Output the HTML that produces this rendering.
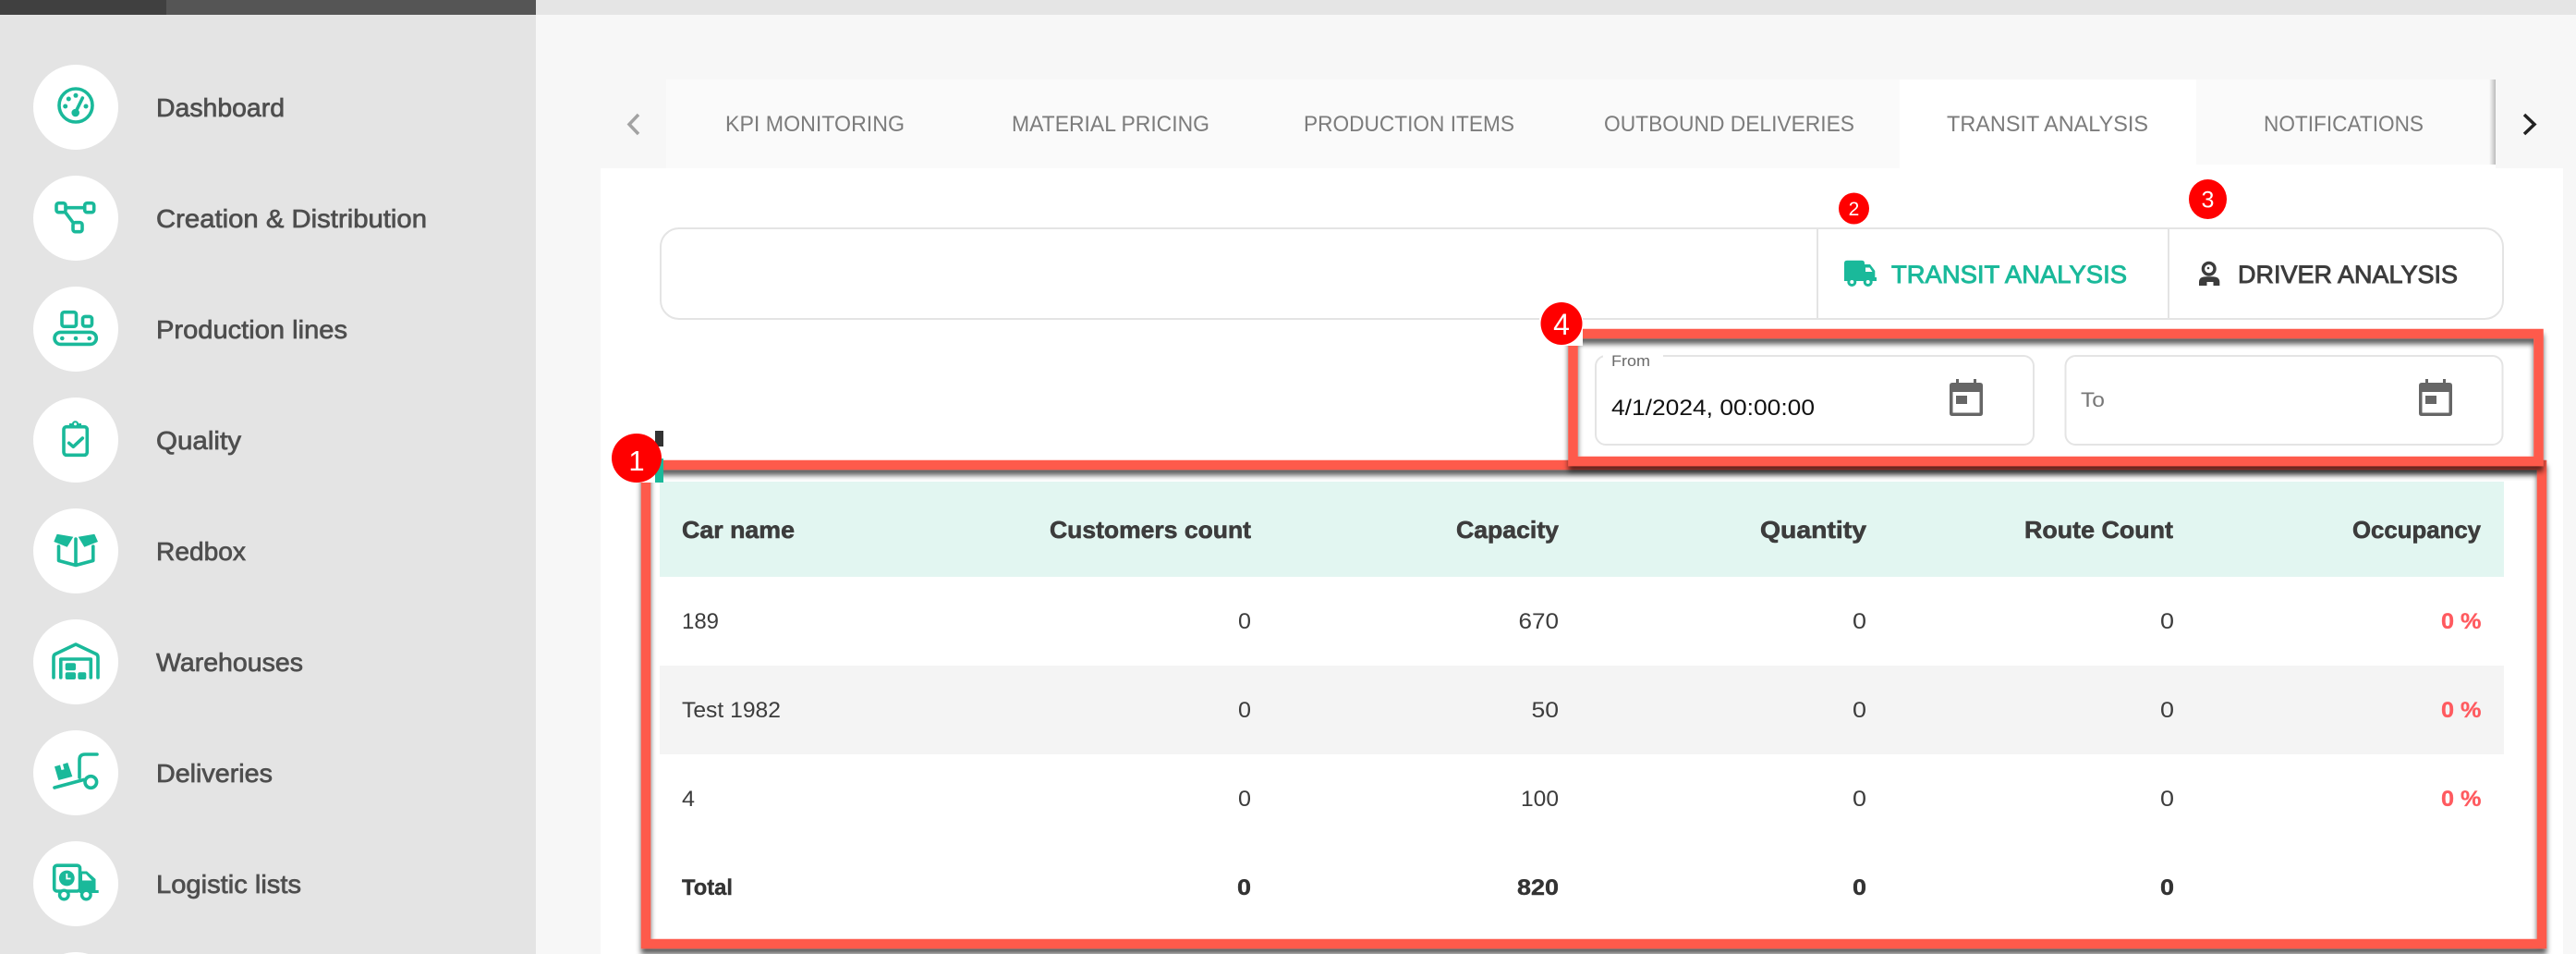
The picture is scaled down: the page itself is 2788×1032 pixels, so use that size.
<!DOCTYPE html>
<html lang="en">
<head>
<meta charset="utf-8">
<title>Transit Analysis</title>
<style>
html,body{margin:0;padding:0;width:2788px;height:1032px;overflow:hidden;background:#f7f7f7}
svg{display:block}
text{font-family:"Liberation Sans",sans-serif}
.nav{font-size:28px;fill:#4e4e4e;stroke:#4e4e4e;stroke-width:.7px}
.tab{font-size:24px;fill:#7c7c7c}
.btn{font-size:27px;stroke-width:.9px}
.th{font-size:26px;font-weight:700;fill:#3c3c3c;stroke:#3c3c3c;stroke-width:.6px}
.td{font-size:24px;fill:#3c3c3c}
.tb{font-size:24px;font-weight:700;fill:#333;stroke:#333;stroke-width:.4px}
.pc{font-size:24px;font-weight:700;fill:#ff5a5f;stroke:#ff5a5f;stroke-width:.3px}
.bd{fill:#fff;text-anchor:middle}
.i{fill:none;stroke:#1ab99a;stroke-width:3.6;stroke-linecap:round;stroke-linejoin:round}
.f{fill:#1ab99a;stroke:none}
</style>
</head>
<body>
<svg xmlns="http://www.w3.org/2000/svg" width="2788" height="1032" viewBox="0 0 2788 1032">
<defs>
<filter id="sh" filterUnits="userSpaceOnUse" x="600" y="300" width="2188" height="732">
<feDropShadow dx="0" dy="6" stdDeviation="3" flood-color="#000" flood-opacity=".62"/>
</filter>
<linearGradient id="edge" x1="0" x2="1" y1="0" y2="0">
<stop offset="0" stop-color="#000" stop-opacity="0"/>
<stop offset="1" stop-color="#000" stop-opacity=".25"/>
</linearGradient>
</defs>

<!-- page backgrounds -->
<rect width="2788" height="1032" fill="#f7f7f7"/>
<rect x="580" width="2208" height="16" fill="#e5e5e5"/>
<rect width="180" height="16" fill="#404040"/>
<rect x="180" width="400" height="16" fill="#555"/>
<rect y="16" width="580" height="1016" fill="#e4e4e4"/>

<!-- sidebar -->
<g fill="#fff">
<circle cx="82" cy="116" r="46"/><circle cx="82" cy="236" r="46"/><circle cx="82" cy="356" r="46"/><circle cx="82" cy="476" r="46"/><circle cx="82" cy="596" r="46"/><circle cx="82" cy="716" r="46"/><circle cx="82" cy="836" r="46"/><circle cx="82" cy="956" r="46"/><path d="M68.600 1032A46 46 0 0 1 95.400 1032z"/>
</g>
<text class="nav" x="169" y="126" textLength="139" lengthAdjust="spacingAndGlyphs">Dashboard</text>
<text class="nav" x="169" y="246" textLength="293" lengthAdjust="spacingAndGlyphs">Creation &amp; Distribution</text>
<text class="nav" x="169" y="366" textLength="207" lengthAdjust="spacingAndGlyphs">Production lines</text>
<text class="nav" x="169" y="486" textLength="92" lengthAdjust="spacingAndGlyphs">Quality</text>
<text class="nav" x="169" y="606" textLength="97" lengthAdjust="spacingAndGlyphs">Redbox</text>
<text class="nav" x="169" y="726" textLength="159" lengthAdjust="spacingAndGlyphs">Warehouses</text>
<text class="nav" x="169" y="846" textLength="126" lengthAdjust="spacingAndGlyphs">Deliveries</text>
<text class="nav" x="169" y="966" textLength="157" lengthAdjust="spacingAndGlyphs">Logistic lists</text>

<!-- dashboard icon -->
<circle class="i" cx="82" cy="114" r="18"/>
<g class="f"><circle cx="70.700" cy="115" r="2.500"/><circle cx="74.300" cy="107" r="2.500"/><circle cx="82" cy="103.300" r="2.500"/><circle cx="93" cy="115" r="2.500"/><circle cx="81.700" cy="122" r="4.300"/></g>
<path class="i" d="M82 121L89.300 106"/>
<!-- network icon -->
<g class="i"><rect x="61" y="219.700" width="10" height="10" rx="2.500"/><rect x="91.700" y="219.700" width="10" height="10" rx="2.500"/><rect x="79" y="240.700" width="10" height="10" rx="2.500"/><path d="M71 224.700H91.700M71 230L79 240.700"/></g>
<!-- conveyor icon -->
<g class="i"><rect x="67" y="337.700" width="15.500" height="15.500" rx="2.500"/><rect x="89.500" y="342.400" width="10" height="10.500" rx="2.500"/><rect x="59" y="359.400" width="45.300" height="13" rx="6.500"/></g>
<g class="f"><circle cx="67.300" cy="366" r="2.300"/><circle cx="82" cy="366" r="2.300"/><circle cx="96.700" cy="366" r="2.300"/></g>
<!-- clipboard icon -->
<g class="i"><rect x="69" y="461.700" width="25.300" height="30.600" rx="3"/><path d="M74.700 479.300L79.300 483.300L89.300 474"/></g>
<path class="f" d="M75 462.500V458h3a3.600 3.600 0 0 1 7 0h3v4.500z"/>
<circle cx="81.500" cy="458.700" r="1.500" fill="#fff"/>
<!-- box icon -->
<g class="f"><path d="M61.700 577.700L79.300 580.700L72.700 591.700L58.300 586z"/><path d="M102.300 577.700L84.700 580.700L91.300 591.700L106 586z"/></g>
<path class="i" d="M63.500 591V606.500L82 611.500L100.800 606.500V591M82 583V611"/>
<!-- warehouse icon -->
<g class="i"><path d="M58 733V711Q58 708 61 707L82 697L103 707Q106 708 106 711V733"/><path d="M65.800 733V713H98.300V733"/></g>
<g class="f"><rect x="70.700" y="717.300" width="11.300" height="8" rx="2"/><rect x="70.700" y="727.300" width="11.300" height="7.700" rx="2"/><rect x="84.300" y="727.300" width="9" height="7.700" rx="2"/></g>
<!-- deliveries icon -->
<path class="i" d="M105 816H92Q86 816 86 822V841M59 852L90.500 843.500"/>
<circle class="i" cx="98.300" cy="846" r="6.300"/>
<path class="f" d="M59 829.300L65 827.500L66.500 833L69.500 832.200L68 826.700L73.300 825L78.300 840L63.300 844z"/>
<!-- logistics icon -->
<rect class="i" x="58.700" y="936.200" width="27.800" height="27.800" rx="3"/>
<circle class="f" cx="72.300" cy="950" r="8.400"/>
<path d="M72.300 945V950.500H76.500" fill="none" stroke="#fff" stroke-width="1.800"/>
<path class="f" d="M86 942.500H94L103.500 951V963H106.700V966H86z"/>
<path d="M89 945.500H93L99.500 952.500H89z" fill="#fff"/>
<g fill="#fff" stroke="#1ab99a" stroke-width="3.400"><circle cx="69.300" cy="968" r="4.800"/><circle cx="93.300" cy="968" r="4.800"/></g>

<!-- tabs -->
<rect x="721" y="86" width="1335" height="96" fill="#fafafa"/>
<rect x="2377" y="86" width="324" height="92" fill="#fafafa"/>
<rect x="2694" y="86" width="7" height="96" fill="url(#edge)"/>
<rect x="650" y="182" width="2124" height="850" fill="#fff"/>
<rect x="2056" y="86" width="321" height="100" fill="#fff"/>
<rect x="2377" y="178" width="324" height="4" fill="#fff"/>
<path d="M691 124L681 134.500L691 145" fill="none" stroke="#a2a2a2" stroke-width="3.500"/>
<path d="M2732 124L2743 134.500L2732 145" fill="none" stroke="#222" stroke-width="3.500"/>
<text class="tab" x="785" y="142" textLength="194" lengthAdjust="spacingAndGlyphs">KPI MONITORING</text>
<text class="tab" x="1095" y="142" textLength="214" lengthAdjust="spacingAndGlyphs">MATERIAL PRICING</text>
<text class="tab" x="1411" y="142" textLength="228" lengthAdjust="spacingAndGlyphs">PRODUCTION ITEMS</text>
<text class="tab" x="1736" y="142" textLength="271" lengthAdjust="spacingAndGlyphs">OUTBOUND DELIVERIES</text>
<text class="tab" x="2107" y="142" textLength="218" lengthAdjust="spacingAndGlyphs">TRANSIT ANALYSIS</text>
<text class="tab" x="2450" y="142" textLength="173" lengthAdjust="spacingAndGlyphs">NOTIFICATIONS</text>

<!-- button group -->
<rect x="715" y="247" width="1994" height="98" rx="20" fill="#fff" stroke="#e4e4e4" stroke-width="2"/>
<path d="M1967 247V345M2347 247V345" stroke="#e4e4e4" stroke-width="2"/>
<path class="f" d="M1999 281.700H2015Q2018 281.700 2018 284.700V286H2024L2029.300 293V300H2031V304H1996V284.700Q1996 281.700 1999 281.700z"/>
<path d="M2019 289.500H2023.500L2026.500 294H2019z" fill="#fff"/>
<g fill="#fff" stroke="#1ab99a" stroke-width="3"><circle cx="2004.300" cy="305" r="3.500"/><circle cx="2021.700" cy="305" r="3.500"/></g>
<text class="btn" x="2047" y="306" textLength="255" lengthAdjust="spacingAndGlyphs" fill="#1ab99a" stroke="#1ab99a">TRANSIT ANALYSIS</text>
<circle cx="2390.700" cy="290.700" r="6.300" fill="none" stroke="#3c3c3c" stroke-width="3.400"/>
<circle cx="2390" cy="290" r="1.300" fill="#3c3c3c"/>
<path d="M2380 309V305Q2380 299.300 2388 299.300H2394Q2402.300 299.300 2402.300 305V309z" fill="#3c3c3c"/>
<rect x="2388.500" y="305" width="7" height="4" fill="#fff"/>
<text class="btn" x="2422" y="306" textLength="238" lengthAdjust="spacingAndGlyphs" fill="#3c3c3c" stroke="#3c3c3c">DRIVER ANALYSIS</text>

<!-- date fields -->
<rect x="1727" y="385" width="474" height="96" rx="11" fill="#fff" stroke="#e4e4e4" stroke-width="2"/>
<rect x="2235.500" y="385" width="473" height="96" rx="11" fill="#fff" stroke="#e4e4e4" stroke-width="2"/>
<rect x="1735" y="380" width="65" height="10" fill="#fff"/>
<text x="1744" y="396" font-size="17" fill="#6a6a6a" textLength="42" lengthAdjust="spacingAndGlyphs">From</text>
<text x="1744" y="449" font-size="24" fill="#111" textLength="220" lengthAdjust="spacingAndGlyphs">4/1/2024, 00:00:00</text>
<text x="2252" y="440" font-size="22" fill="#777" textLength="26" lengthAdjust="spacingAndGlyphs">To</text>
<g fill="#666">
<path d="M2117 410h3v4h16v-4h3v4h4q3 0 3 3v30q0 3 -3 3h-30q-3 0 -3 -3v-30q0 -3 3 -3h4zM2113.500 424v22.500h29v-22.500zM2117 428h12v9h-12z" fill-rule="evenodd"/>
<path d="M2625 410h3v4h16v-4h3v4h4q3 0 3 3v30q0 3 -3 3h-30q-3 0 -3 -3v-30q0 -3 3 -3h4zM2621.500 424v22.500h29v-22.500zM2625 428h12v9h-12z" fill-rule="evenodd"/>
</g>

<!-- table -->
<rect x="714" y="521" width="1996" height="103" fill="#e2f6f1"/>
<rect x="714" y="720" width="1996" height="96" fill="#f4f4f4"/>
<text class="th" x="738" y="582" textLength="122" lengthAdjust="spacingAndGlyphs">Car name</text>
<text class="th" x="1136" y="582" textLength="218" lengthAdjust="spacingAndGlyphs">Customers count</text>
<text class="th" x="1576" y="582" textLength="111" lengthAdjust="spacingAndGlyphs">Capacity</text>
<text class="th" x="1905" y="582" textLength="115" lengthAdjust="spacingAndGlyphs">Quantity</text>
<text class="th" x="2191" y="582" textLength="161" lengthAdjust="spacingAndGlyphs">Route Count</text>
<text class="th" x="2546" y="582" textLength="139" lengthAdjust="spacingAndGlyphs">Occupancy</text>

<text class="td" x="738" y="680" textLength="40" lengthAdjust="spacingAndGlyphs">189</text>
<text class="td" x="1340" y="680" textLength="14" lengthAdjust="spacingAndGlyphs">0</text>
<text class="td" x="1643.500" y="680" textLength="43.500" lengthAdjust="spacingAndGlyphs">670</text>
<text class="td" x="2005" y="680" textLength="15" lengthAdjust="spacingAndGlyphs">0</text>
<text class="td" x="2338" y="680" textLength="15" lengthAdjust="spacingAndGlyphs">0</text>
<text class="pc" x="2642" y="680" textLength="43.500" lengthAdjust="spacingAndGlyphs">0 %</text>

<text class="td" x="738" y="776" textLength="107" lengthAdjust="spacingAndGlyphs">Test 1982</text>
<text class="td" x="1340" y="776" textLength="14" lengthAdjust="spacingAndGlyphs">0</text>
<text class="td" x="1657.500" y="776" textLength="29.500" lengthAdjust="spacingAndGlyphs">50</text>
<text class="td" x="2005" y="776" textLength="15" lengthAdjust="spacingAndGlyphs">0</text>
<text class="td" x="2338" y="776" textLength="15" lengthAdjust="spacingAndGlyphs">0</text>
<text class="pc" x="2642" y="776" textLength="43.500" lengthAdjust="spacingAndGlyphs">0 %</text>

<text class="td" x="738" y="872" textLength="14" lengthAdjust="spacingAndGlyphs">4</text>
<text class="td" x="1340" y="872" textLength="14" lengthAdjust="spacingAndGlyphs">0</text>
<text class="td" x="1646" y="872" textLength="41" lengthAdjust="spacingAndGlyphs">100</text>
<text class="td" x="2005" y="872" textLength="15" lengthAdjust="spacingAndGlyphs">0</text>
<text class="td" x="2338" y="872" textLength="15" lengthAdjust="spacingAndGlyphs">0</text>
<text class="pc" x="2642" y="872" textLength="43.500" lengthAdjust="spacingAndGlyphs">0 %</text>

<text class="tb" x="738" y="968" textLength="55" lengthAdjust="spacingAndGlyphs">Total</text>
<text class="tb" x="1339" y="968" textLength="15" lengthAdjust="spacingAndGlyphs">0</text>
<text class="tb" x="1642" y="968" textLength="45" lengthAdjust="spacingAndGlyphs">820</text>
<text class="tb" x="2005" y="968" textLength="15" lengthAdjust="spacingAndGlyphs">0</text>
<text class="tb" x="2338" y="968" textLength="15" lengthAdjust="spacingAndGlyphs">0</text>

<!-- annotation rectangles -->
<rect x="699" y="503" width="2052" height="518" fill="none" stroke="#fe5a4c" stroke-width="10.500" filter="url(#sh)"/>
<rect x="1702.500" y="361" width="1045" height="138" fill="none" stroke="#fe5a4c" stroke-width="10.500" filter="url(#sh)"/>

<!-- badge 4 -->
<rect x="1666" y="325" width="47" height="49" fill="#fff"/>
<ellipse cx="1690" cy="350" rx="22.500" ry="23" fill="#f00"/>
<text class="bd" x="1690" y="362" font-size="32">4</text>
<!-- badge 2 -->
<ellipse cx="2006.500" cy="225.500" rx="16.500" ry="17" fill="#f00"/>
<text class="bd" x="2006.500" y="233" font-size="21">2</text>
<!-- badge 3 -->
<ellipse cx="2389.500" cy="215.500" rx="20.500" ry="21.500" fill="#f00"/>
<text class="bd" x="2389.500" y="224.500" font-size="25">3</text>
<!-- badge 1 -->
<rect x="655" y="466" width="63" height="56" fill="#fff"/>
<rect x="709" y="466" width="9" height="17" fill="#333"/>
<rect x="709" y="496" width="9" height="26" fill="#1ab99a"/>
<ellipse cx="689" cy="495.500" rx="27" ry="26.500" fill="#f00"/>
<text class="bd" x="689" y="509" font-size="31">1</text>
</svg>
</body>
</html>
